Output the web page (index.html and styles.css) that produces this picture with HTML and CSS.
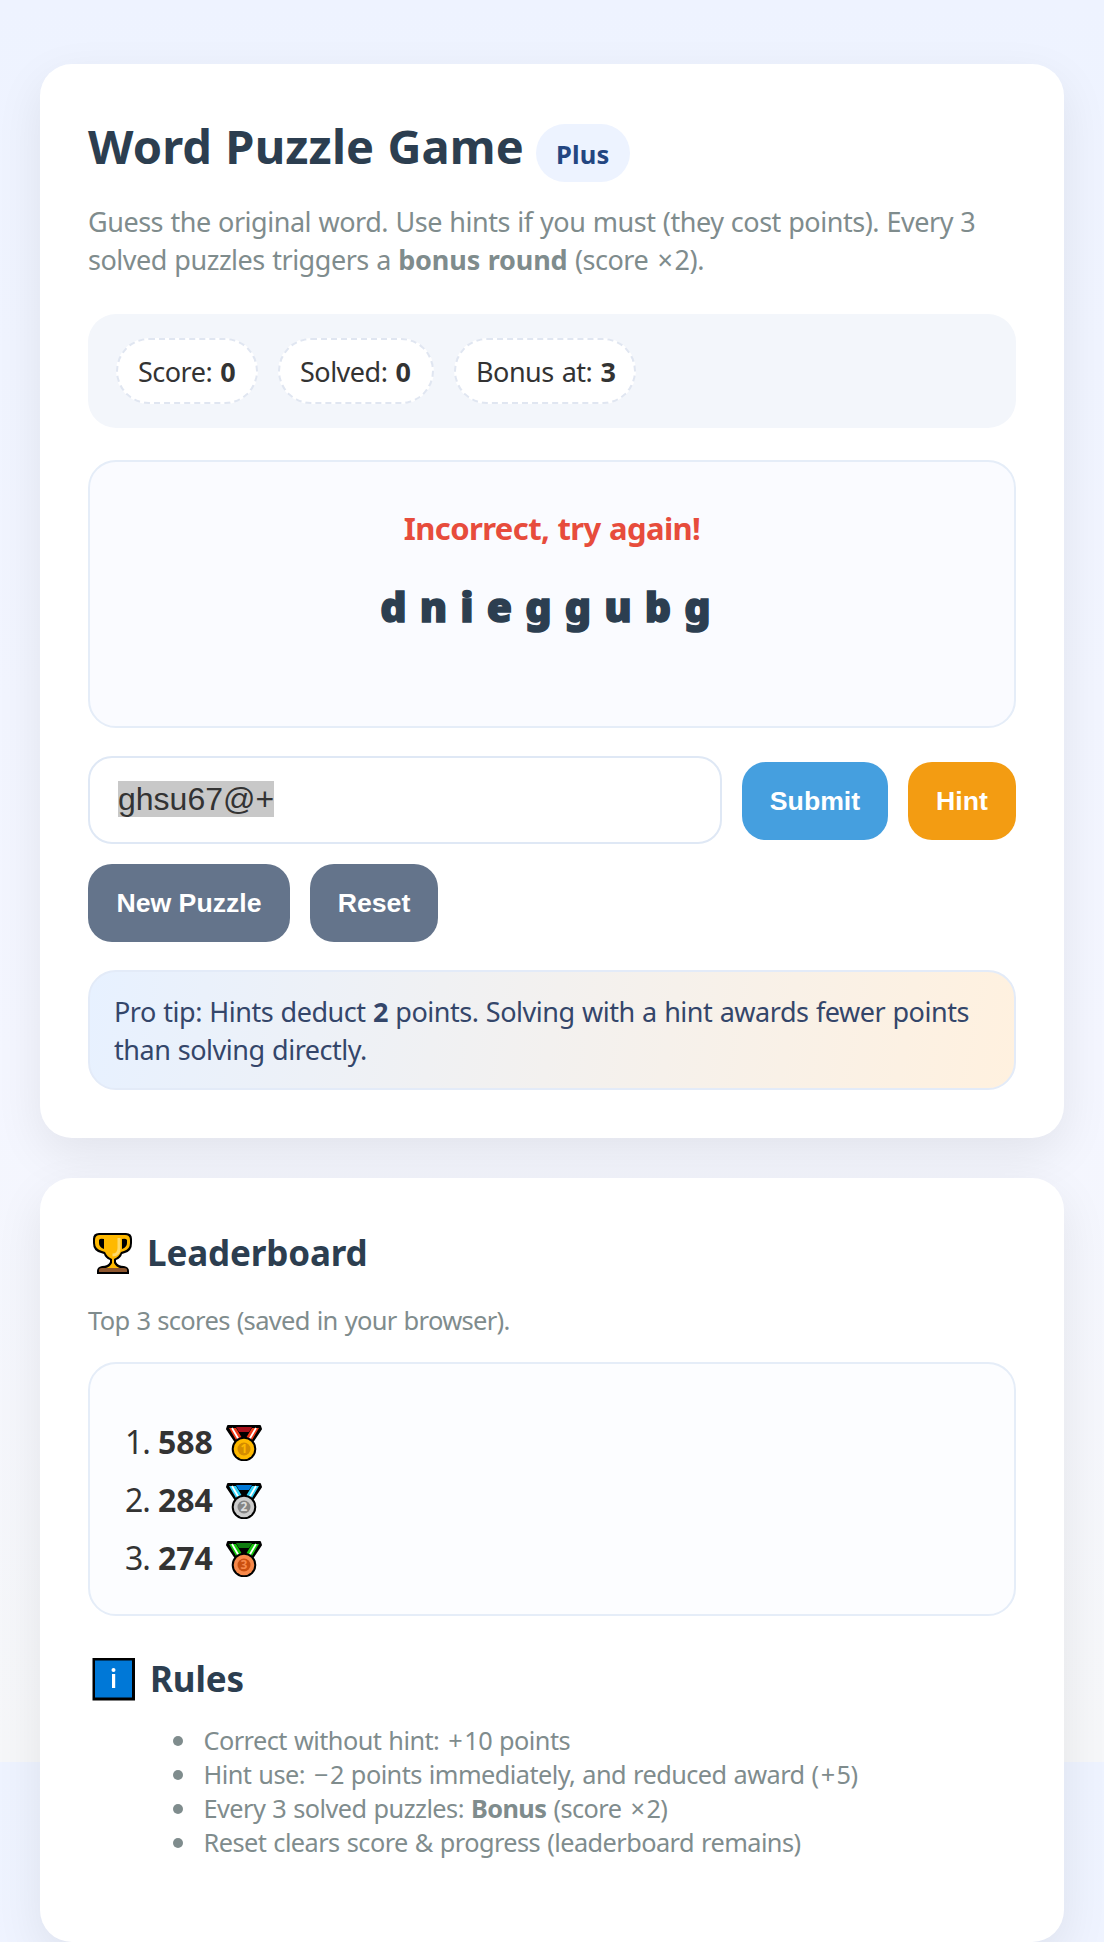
FILE: index.html
```
<!DOCTYPE html>
<html lang="en">
<head>
<meta charset="utf-8">
<title>Word Puzzle Game</title>
<link rel="stylesheet" href="styles.css">
</head>
<body>
<main class="page">
  <section class="card">
    <header class="title-row">
      <h1>Word Puzzle Game</h1>
      <span class="badge">Plus</span>
    </header>
    <p class="intro">Guess the original word. Use hints if you must (they cost points). Every 3<br>solved puzzles triggers a <strong>bonus round</strong> (score <span class="op">×</span>2).</p>
    <div class="stats">
      <div class="pill pill-score">Score: <strong>0</strong></div>
      <div class="pill pill-solved">Solved: <strong>0</strong></div>
      <div class="pill pill-bonus">Bonus at: <strong>3</strong></div>
    </div>
    <div class="puzzle">
      <div class="message">Incorrect, try again!</div>
      <div class="scramble">dnieggubg</div>
    </div>
    <div class="controls">
      <div class="guess" role="textbox"><span class="selected">ghsu67@+</span></div>
      <button class="btn submit">Submit</button>
      <button class="btn hint">Hint</button>
      <button class="btn new">New Puzzle</button>
      <button class="btn reset">Reset</button>
    </div>
    <div class="tip">Pro tip: Hints deduct <strong>2</strong> points. Solving with a hint awards fewer points<br>than solving directly.</div>
  </section>

  <section class="card board-card">
    <h2><svg class="h-icon" viewBox="0 0 44 44" width="44" height="44">
      <path d="M11 2H35Q41 2 41 8V12Q41 20 34 22L31 23Q30 27 25 29V31Q27 35 33 35Q38 36 38 40V43H6V40Q6 36 11 35Q17 35 19 31V29Q14 27 13 23L10 22Q2 20 2 12V8Q2 2 8 2Z" fill="#000"/>
      <path d="M9 4H34Q39 4 39 9V12Q39 18 33 20L30 21Q28 26 23 28V32Q25 36 29 37H15Q19 36 21 32V28Q16 26 14 21L11 20Q4 18 4 12V9Q4 4 9 4Z" fill="#ffb900"/>
      <path d="M13 8V18Q8 16 8 12V9Q9 7 13 8ZM31 8V18Q36 16 36 12V9Q35 7 31 8Z" fill="#000"/>
      <path d="M28 7V17Q28 24 21.500 24" fill="none" stroke="#ffd966" stroke-width="3"/>
      <path d="M8 41V39Q8 37 11 37H33Q36 37 36 39V41Z" fill="#8e562e"/>
    </svg><span class="lead">Leaderboard</span></h2>
    <p class="small">Top 3 scores (saved in your browser).</p>
    <div class="board">
      <div class="rank"><span class="num">1.</span><strong>588</strong>
        <svg class="medal" viewBox="0 0 36 36" width="36" height="36"><path d="M2 1H34L35 4L27 16H9L1 4Z" fill="#000" stroke="#000" stroke-width="2" stroke-linejoin="round"/><path d="M10 2H26L23 7H13Z" fill="#a80f1a"/><path d="M3 3H10L16 13L10 15ZM33 3H26L20 13L26 15Z" fill="#f03a17"/><path d="M6 3L13 15M30 3L23 15" stroke="#fff" stroke-width="1.800"/><circle cx="18" cy="24" r="12.300" fill="#000"/><circle cx="18" cy="24" r="10.300" fill="#ffb900"/><circle cx="18" cy="24" r="6.500" fill="#d48c00"/><text class="digit" x="18" y="28.200" fill="#ffb900">1</text></svg></div>
      <div class="rank"><span class="num">2.</span><strong>284</strong>
        <svg class="medal" viewBox="0 0 36 36" width="36" height="36"><path d="M2 1H34L35 4L27 16H9L1 4Z" fill="#000" stroke="#000" stroke-width="2" stroke-linejoin="round"/><path d="M10 2H26L23 7H13Z" fill="#0078d7"/><path d="M3 3H10L16 13L10 15ZM33 3H26L20 13L26 15Z" fill="#31d2f7"/><path d="M6 3L13 15M30 3L23 15" stroke="#fff" stroke-width="1.800"/><circle cx="18" cy="24" r="12.300" fill="#000"/><circle cx="18" cy="24" r="10.300" fill="#ccc"/><circle cx="18" cy="24" r="6.500" fill="#858585"/><text class="digit" x="18" y="28.200" fill="#ddd">2</text></svg></div>
      <div class="rank"><span class="num">3.</span><strong>274</strong>
        <svg class="medal" viewBox="0 0 36 36" width="36" height="36"><path d="M2 1H34L35 4L27 16H9L1 4Z" fill="#000" stroke="#000" stroke-width="2" stroke-linejoin="round"/><path d="M10 2H26L23 7H13Z" fill="#107c10"/><path d="M3 3H10L16 13L10 15ZM33 3H26L20 13L26 15Z" fill="#16c60c"/><path d="M6 3L13 15M30 3L23 15" stroke="#fff" stroke-width="1.800"/><circle cx="18" cy="24" r="12.300" fill="#000"/><circle cx="18" cy="24" r="10.300" fill="#f7894a"/><circle cx="18" cy="24" r="6.500" fill="#ca5010"/><text class="digit" x="18" y="28.200" fill="#f7894a">3</text></svg></div>
    </div>
    <h2 class="rules-title"><svg class="h-icon info" viewBox="0 0 44 44" width="44" height="44"><rect x=".5" y="1" width="42.500" height="42.500" fill="#000"/><rect x="3" y="3.500" width="37" height="37" fill="#0078d7"/><circle cx="21.500" cy="13" r="2" fill="#fff"/><rect x="20" y="17" width="3.200" height="14" fill="#fff"/></svg><span class="rules-text">Rules</span></h2>
    <ul class="rules">
      <li>Correct without hint: <span class="op">+</span>10 points</li>
      <li>Hint use: <span class="op">−</span>2 points immediately, and reduced award (<span class="op">+</span>5)</li>
      <li>Every 3 solved puzzles: <strong>Bonus</strong> (score <span class="op">×</span>2)</li>
      <li>Reset clears score &amp; progress (leaderboard remains)</li>
    </ul>
  </section>
</main>
</body>
</html>
```
FILE: styles.css
```
* { box-sizing: border-box; }
html {
  background: linear-gradient(180deg, #eef3ff 0, #f4f6ff 60%, #f6f7f9 100%) 0 0 / 100% 1762px repeat-y;
}
body {
  margin: 0;
  color: #333;
  font-family: "Noto Sans", "Open Sans", sans-serif;
  font-size: 27px;
  line-height: 38px;
  letter-spacing: -.47px;
  word-spacing: .8px;
}
strong { font-weight: 700; }
h1, h2, p, ul { margin: 0; padding: 0; }
.page {
  display: flex;
  flex-direction: column;
  gap: 40px;
  padding: 64px 40px 0;
  height: 1942px;
  overflow: hidden;
}
.card {
  flex: none;
  height: 1074px;
  padding: 48px;
  background: #fff;
  border-radius: 32px;
  box-shadow: 0 16px 48px rgba(0, 0, 0, .08);
}
.board-card { height: 764px; }
.title-row {
  display: flex;
  align-items: baseline;
  gap: 12px;
  height: 91px;
  padding-top: 2px;
}
h1, h2 { color: #2c3e50; font-weight: 700; }
h1 { font-size: 47px; line-height: 64px; letter-spacing: .13px; }
.badge {
  height: 58px;
  padding: 1px 20px 0;
  border-radius: 29px;
  background: #edf3ff;
  color: #234681;
  font-size: 25.5px;
  line-height: 59px;
  font-weight: 700;
  letter-spacing: .2px;
}
.intro { color: #7f8c8d; white-space: nowrap; }
.intro strong { letter-spacing: -.15px; }
.op { margin: 0 2px; }
.stats {
  display: flex;
  gap: 20px;
  margin-top: 35px;
  padding: 24px 28px;
  border-radius: 28px;
  background: #f3f6fb;
}
.pill {
  height: 66px;
  border: 2px dashed #e0e6f1;
  border-radius: 33px;
  background: #fff;
  line-height: 63px;
  padding-left: 20px;
  letter-spacing: -.5px;
  word-spacing: 1.5px;
  white-space: nowrap;
}
.pill-score { width: 142px; }
.pill-solved { width: 156px; }
.pill-bonus { width: 182px; }
.puzzle {
  height: 268px;
  margin-top: 32px;
  padding-top: 44px;
  border: 2px solid #e5edf8;
  border-radius: 28px;
  background: #fafbff;
  text-align: center;
}
.message {
  color: #e74c3c;
  font-size: 31px;
  line-height: 44px;
  font-weight: 700;
  letter-spacing: -.6px;
}
.scramble {
  margin-top: 26px;
  color: #2c3e50;
  font-size: 41px;
  line-height: 60px;
  font-weight: 900;
  letter-spacing: 13.1px;
  -webkit-text-stroke: 1.4px #2c3e50;
}
.controls {
  display: flex;
  flex-wrap: wrap;
  align-items: center;
  gap: 20px;
  margin-top: 28px;
}
.guess {
  flex: 0 0 634px;
  height: 88px;
  padding: 0 28px 2px;
  border: 2px solid #dfe8f5;
  border-radius: 24px;
  font: 32px/83px "Liberation Sans", Arial, sans-serif;
  letter-spacing: 0;
  word-spacing: 0;
}
.selected { background: #c8c8c8; }
.btn {
  height: 78px;
  padding: 0;
  border: 0;
  border-radius: 24px;
  background: #64748b;
  color: #fff;
  font: 700 26.67px "Liberation Sans", Arial, sans-serif;
}
.submit, .hint { margin: 2px 0 0; }
.submit { width: 146px; background: #459fdf; }
.hint { width: 108px; background: #f39c12; }
.new { width: 202px; }
.reset { width: 128px; }
.tip {
  height: 120px;
  margin-top: 28px;
  padding: 21px 24px;
  border: 2px solid #e3ebf8;
  border-radius: 28px;
  background: linear-gradient(100deg, #e7f1ff, #fff1df);
  color: #34466a;
  white-space: nowrap;
}
h2 {
  display: flex;
  height: 50px;
  padding-top: 2px;
  font-size: 35px;
  line-height: 50px;
  letter-spacing: -.15px;
}
.h-icon { flex: none; margin: 3px 12px 0 3px; }
.info { margin: 3px 14px 0 4px; }
.small {
  margin-top: 27px;
  color: #7f8c8d;
  font-size: 25.5px;
  line-height: 34px;
  letter-spacing: -.68px;
  word-spacing: 1px;
}
.board {
  height: 254px;
  margin-top: 25px;
  padding: 49px 0 0 35px;
  border: 2px solid #e5edf8;
  border-radius: 28px;
  background: #fcfdff;
}
.rank {
  display: flex;
  height: 58px;
  font-size: 32px;
  line-height: 58px;
  letter-spacing: -.1px;
}
.num { width: 33px; letter-spacing: -1px; }
.medal { margin: 12px 0 0 13px; }
.digit {
  font: 700 12px "Noto Sans", sans-serif;
  letter-spacing: 0;
  text-anchor: middle;
}
.rules-title { margin-top: 36px; }
.rules {
  margin-top: 21px;
  padding-left: 115.5px;
  color: #7f8c8d;
  font-size: 25.3px;
  line-height: 34px;
  letter-spacing: -.55px;
  word-spacing: 1px;
  list-style: none;
}
.rules li { display: flex; white-space: pre; }
.rules li::before {
  content: "";
  flex: none;
  width: 10px;
  height: 10px;
  margin: 13px 21px 0 -31px;
  border-radius: 50%;
  background: #7f8c8d;
}
```
